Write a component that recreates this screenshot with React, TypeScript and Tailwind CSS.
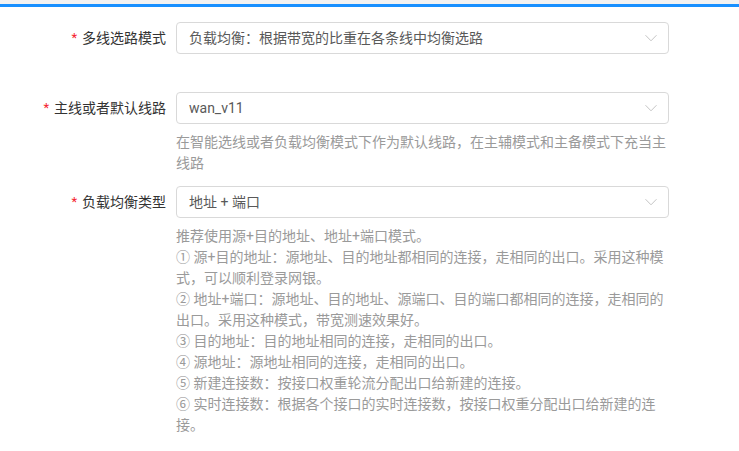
import type { ReactNode } from 'react';

const Chevron = () => (
  <svg width="12" height="12" viewBox="0 0 12 12" fill="none" className="shrink-0">
    <path d="M0.5 3.2 L6 8.8 L11.5 3.2" stroke="#c4c4c4" strokeWidth="1" />
  </svg>
);

interface FieldProps {
  label: string;
  value: string;
  help?: ReactNode;
  className?: string;
}

const Field = ({ label, value, help, className }: FieldProps) => (
  <div className={className}>
    <div className="flex items-center">
      <label className="flex h-8 w-[166px] shrink-0 items-center justify-end text-sm text-[#333]">
        <span className="mr-[5px] text-[13px] text-[#f5222d]">*</span>
        {label}
      </label>
      <div className="ml-[10px] flex h-8 w-[493px] items-center justify-between rounded border border-[#d9d9d9] bg-white pr-[11px] pl-3 text-sm text-[#595959]">
        <span>{value}</span>
        <Chevron />
      </div>
    </div>
    {help && <div className="mt-2 ml-[176px] w-[493px] text-sm leading-[21px] text-[#9a9a9a]">{help}</div>}
  </div>
);

export default function App() {
  return (
    <div className="min-h-[451px] w-full bg-white font-['Roboto','Noto_Sans_CJK_SC',sans-serif]">
      <div className="h-1 bg-[#f2f2f2]" />
      <div className="h-[3px] bg-[#1890ff]" />
      <div className="pt-[15px]">
        <Field className="mb-[38px]" label="多线选路模式" value="负载均衡：根据带宽的比重在各条线中均衡选路" />
        <Field
          className="mb-3"
          label="主线或者默认线路"
          value="wan_v11"
          help={
            <>
              在智能选线或者负载均衡模式下作为默认线路，在主辅模式和主备模式下充当主
              <br />
              线路
            </>
          }
        />
        <Field
          label="负载均衡类型"
          value="地址 + 端口"
          help={
            <>
              推荐使用源+目的地址、地址+端口模式。
              <br />
              ① 源+目的地址：源地址、目的地址都相同的连接，走相同的出口。采用这种模
              <br />
              式，可以顺利登录网银。
              <br />
              ② 地址+端口：源地址、目的地址、源端口、目的端口都相同的连接，走相同的
              <br />
              出口。采用这种模式，带宽测速效果好。
              <br />
              ③ 目的地址：目的地址相同的连接，走相同的出口。
              <br />
              ④ 源地址：源地址相同的连接，走相同的出口。
              <br />
              ⑤ 新建连接数：按接口权重轮流分配出口给新建的连接。
              <br />
              ⑥ 实时连接数：根据各个接口的实时连接数，按接口权重分配出口给新建的连
              <br />
              接。
            </>
          }
        />
      </div>
    </div>
  );
}
